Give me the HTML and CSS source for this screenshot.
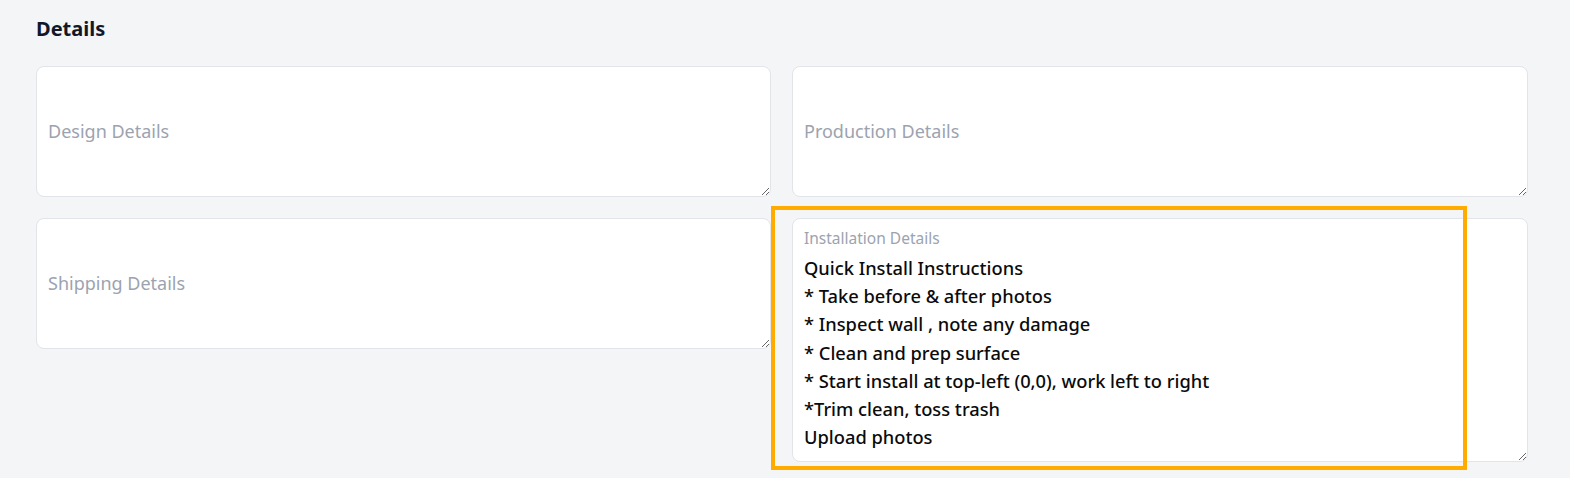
FILE: index.html
```html
<!DOCTYPE html>
<html lang="en">

<head>
    <meta charset="UTF-8">
    <meta name="viewport" content="width=device-width, initial-scale=1.0">
    <title>Details</title>
    <link rel="stylesheet" href="styles.css">
</head>

<body>
    <div class="container">
        <h2>Details</h2>
        <div class="details-grid">
            <div class="field">
                <textarea class="field-input"></textarea>
                <label class="field-label">Design Details</label>
            </div>
            <div class="field">
                <textarea class="field-input"></textarea>
                <label class="field-label">Production Details</label>
            </div>
            <div class="field">
                <textarea class="field-input"></textarea>
                <label class="field-label">Shipping Details</label>
            </div>
            <div class="field filled">
                <textarea class="field-input tall">Quick Install Instructions
* Take before &amp; after photos
* Inspect wall , note any damage
* Clean and prep surface
* Start install at top-left (0,0), work left to right
*Trim clean, toss trash
Upload photos</textarea>
                <label class="field-label">Installation Details</label>
            </div>
        </div>
    </div>
    <div class="highlight"></div>
</body>

</html>
```

FILE: styles.css
```css
body {
    font-family: "Noto Sans", Arial, sans-serif;
    background-color: #f4f5f7;
    margin: 0;
    padding: 0;
    min-height: 478px;
    position: relative;
}

.container {
    width: 1492px;
    padding: 14px 0 0 36px;
}

h2 {
    margin: 0 0 22px;
    font-size: 20px;
    font-weight: 700;
    color: #111827;
    line-height: 30px;
}

.details-grid {
    display: grid;
    grid-template-columns: 735px 736px;
    column-gap: 21px;
    row-gap: 21px;
    align-items: start;
}

.field {
    position: relative;
}

.field-input {
    display: block;
    box-sizing: border-box;
    width: 100%;
    height: 131px;
    margin: 0;
    padding: 35px 11px 8px;
    border: 1px solid #e1e4e9;
    border-radius: 8px;
    background-color: #fff;
    font-family: inherit;
    font-size: 18.3px;
    font-weight: 500;
    line-height: 28.2px;
    color: #0b0b0b;
    outline: none;
    overflow: hidden;
}

.field-input.tall {
    height: 244px;
}

.field-label {
    position: absolute;
    left: 12px;
    top: 53px;
    font-size: 18px;
    color: #9ca3af;
    pointer-events: none;
}

.filled .field-label {
    top: 9px;
    font-size: 15.5px;
}

.highlight {
    position: absolute;
    left: 771px;
    top: 206px;
    width: 688px;
    height: 256px;
    border: 4px solid #ffab00;
}
```
